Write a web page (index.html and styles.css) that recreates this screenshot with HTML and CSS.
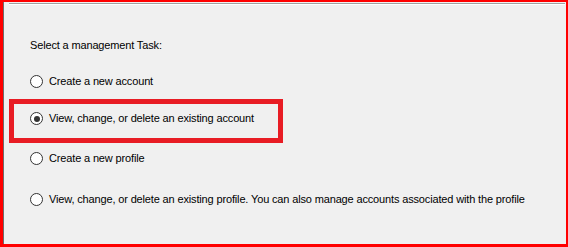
FILE: index.html
```html
<!DOCTYPE html>
<html lang="en">
<head>
    <meta charset="UTF-8">
    <title>Account Management</title>
    <link rel="stylesheet" href="styles.css">
</head>
<body>
    <div class="frame">
        <div class="group">
            <div class="task-title">Select a management Task:</div>

            <label class="option first">
                <input type="radio" name="task" class="radio">
                <span>Create a new account</span>
            </label>

            <div class="highlight">
                <label class="option">
                    <input type="radio" name="task" class="radio" checked>
                    <span>View, change, or delete an existing account</span>
                </label>
            </div>

            <label class="option third">
                <input type="radio" name="task" class="radio">
                <span>Create a new profile</span>
            </label>

            <label class="option fourth">
                <input type="radio" name="task" class="radio">
                <span>View, change, or delete an existing profile. You can also manage accounts associated with the profile</span>
            </label>
        </div>
    </div>
</body>
</html>
```

FILE: styles.css
```css
:root {
    --panel-color: #f0f0f0;
    --frame-red: #ff0000;
    --mark-red: #e81c24;
    --line-gray: #a0a0a0;
    --radio-color: #333;
}

* {
    box-sizing: border-box;
}

body {
    margin: 0;
    width: 568px;
    height: 247px;
    overflow: hidden;
    font-family: "Liberation Sans", Arial, sans-serif;
    font-size: 11px;
    letter-spacing: -0.15px;
    color: #000;
    background: var(--panel-color);
}

.frame {
    height: 247px;
    border: solid var(--frame-red);
    border-width: 2px 2px 3px 3px;
    background: var(--panel-color);
    box-shadow: inset 1px 0 0 #6d6d6d;
    padding-top: 1px;
}

.group {
    margin: 0 1px 0 6px;
    border-top: 1px solid var(--line-gray);
    box-shadow: inset 0 1px 0 #fff;
    padding-left: 21px;
}

.task-title {
    line-height: 13px;
    margin-top: 35px;
}

.option {
    display: flex;
    align-items: center;
    gap: 6px;
    height: 13px;
    line-height: 13px;
    white-space: nowrap;
}

.option.first {
    margin-top: 23px;
}

.option.third {
    margin-top: 9px;
}

.option.fourth {
    margin-top: 28px;
}

.highlight {
    width: 274px;
    margin: 11px 0 0 -21px;
    border: 5px solid var(--mark-red);
    padding: 8px 0 13px 16px;
}

.radio {
    appearance: none;
    -webkit-appearance: none;
    margin: 0;
    width: 13px;
    height: 13px;
    flex: none;
    border: 1px solid var(--radio-color);
    border-radius: 50%;
    background: #fff;
    display: grid;
    place-items: center;
}

.radio:checked::after {
    content: "";
    width: 6px;
    height: 6px;
    border-radius: 50%;
    background: var(--radio-color);
}
```
